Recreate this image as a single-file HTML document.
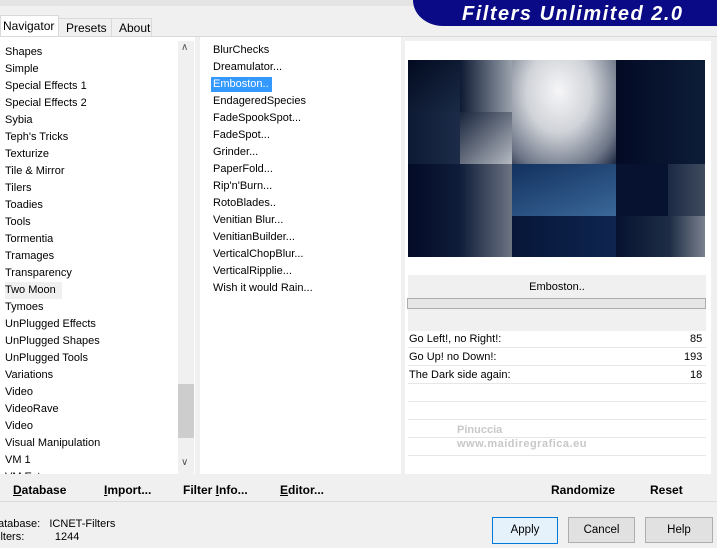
<!DOCTYPE html>
<html><head><style>
body{margin:0;width:717px;height:548px;background:#f0f0f0;font-family:"Liberation Sans",sans-serif;font-size:11.5px;color:#000;position:relative;overflow:hidden}
.a{position:absolute}
.list div{height:17px;line-height:17px;white-space:nowrap}
.cell{position:absolute}
</style></head><body>
<div class="a" style="left:0;top:0;width:717px;height:6px;background:#e4e4e4"></div>
<div class="a" style="left:413px;top:0;width:304px;height:26px;background:#0a0a86;border-bottom-left-radius:30px 26px"></div>
<div class="a" style="left:462px;top:3px;color:#fff;font-weight:bold;font-style:italic;font-size:20px;letter-spacing:1.5px">Filters Unlimited 2.0</div>
<!-- tabs -->
<div class="a" style="left:0;top:15px;width:57px;height:23px;background:#fff;border:1px solid #d9d9d9;border-bottom:none"></div>
<div class="a" style="left:3px;top:19px;font-size:12px">Navigator</div>
<div class="a" style="left:58px;top:18px;width:52px;height:18px;border:1px solid #d9d9d9;border-bottom:none"></div>
<div class="a" style="left:66px;top:21px;font-size:12px">Presets</div>
<div class="a" style="left:111px;top:18px;width:40px;height:18px;border:1px solid #d9d9d9;border-left:none;border-bottom:none"></div>
<div class="a" style="left:119px;top:21px;font-size:12px">About</div>
<div class="a" style="left:0;top:36px;width:717px;height:1px;background:#d9d9d9"></div>
<!-- left list -->
<div class="a" style="left:0;top:37px;width:195px;height:437px;background:#fff"></div>
<div class="a" style="left:178px;top:41px;width:16px;height:433px;background:#f0f0f0"></div>
<div class="a" style="left:178px;top:384px;width:16px;height:54px;background:#cdcdcd"></div>
<div class="a" style="left:181px;top:42px;font-size:10px;color:#555">&#8743;</div>
<div class="a" style="left:181px;top:457px;font-size:10px;color:#555">&#8744;</div>
<div class="a list" style="left:5px;top:44px;width:170px;height:430px;overflow:hidden;font-size:11px">
<div>Shapes</div><div>Simple</div><div>Special Effects 1</div><div>Special Effects 2</div><div>Sybia</div><div>Teph's Tricks</div><div>Texturize</div><div>Tile &amp; Mirror</div><div>Tilers</div><div>Toadies</div><div>Tools</div><div>Tormentia</div><div>Tramages</div><div>Transparency</div><div style="background:#f0f0f0;width:57px;margin-left:-5px;padding-left:5px">Two Moon</div><div>Tymoes</div><div>UnPlugged Effects</div><div>UnPlugged Shapes</div><div>UnPlugged Tools</div><div>Variations</div><div>Video</div><div>VideoRave</div><div>Video</div><div>Visual Manipulation</div><div>VM 1</div><div>VM Extravaganza</div>
</div>
<!-- middle list -->
<div class="a" style="left:200px;top:37px;width:201px;height:437px;background:#fff"></div>
<div class="a" style="left:211px;top:77px;width:61px;height:15px;background:#3399ff"></div>
<div class="a list" style="left:213px;top:42px;font-size:11px">
<div>BlurChecks</div><div>Dreamulator...</div><div style="color:#fff">Emboston..</div><div>EndageredSpecies</div><div>FadeSpookSpot...</div><div>FadeSpot...</div><div>Grinder...</div><div>PaperFold...</div><div>Rip'n'Burn...</div><div>RotoBlades..</div><div>Venitian Blur...</div><div>VenitianBuilder...</div><div>VerticalChopBlur...</div><div>VerticalRipplie...</div><div>Wish it would Rain...</div>
</div>
<!-- right panel -->
<div class="a" style="left:405px;top:41px;width:306px;height:433px;background:#fff"></div>
<div class="a" style="left:408px;top:60px;width:297px;height:197px;background:#0b1a33;overflow:hidden">
<div class="cell" style="left:0;top:0;width:52px;height:52px;background:linear-gradient(135deg,#020a20,#1a2a45)"></div>
<div class="cell" style="left:52px;top:0;width:52px;height:52px;background:linear-gradient(90deg,#0e1a33,#9aa2ad)"></div>
<div class="cell" style="left:104px;top:0;width:104px;height:104px;background:radial-gradient(ellipse at 45% 30%,#f6f6f8 0%,#d0d3d8 40%,#6a7385 80%,#1b2540 100%)"></div>
<div class="cell" style="left:208px;top:0;width:89px;height:104px;background:linear-gradient(90deg,#030a24,#0d1d38)"></div>
<div class="cell" style="left:0;top:52px;width:52px;height:52px;background:linear-gradient(90deg,#0d1a34,#1c2b48)"></div>
<div class="cell" style="left:52px;top:52px;width:52px;height:52px;background:linear-gradient(135deg,#18243c,#b5bac2)"></div>
<div class="cell" style="left:0;top:104px;width:104px;height:93px;background:linear-gradient(90deg,#030b26,#0f1d3a 50%,#6c7482)"></div>
<div class="cell" style="left:104px;top:104px;width:104px;height:52px;background:linear-gradient(160deg,#12315f,#3a6899)"></div>
<div class="cell" style="left:104px;top:156px;width:104px;height:41px;background:linear-gradient(90deg,#071638,#0e2550)"></div>
<div class="cell" style="left:208px;top:104px;width:52px;height:52px;background:#061230"></div>
<div class="cell" style="left:260px;top:104px;width:37px;height:52px;background:linear-gradient(90deg,#1b2944,#404b5e)"></div>
<div class="cell" style="left:208px;top:156px;width:89px;height:41px;background:linear-gradient(90deg,#061230,#1e2d45 60%,#7a818e)"></div>
</div>
<div class="a" style="left:408px;top:275px;width:298px;height:56px;background:#f0f0f0"></div>
<div class="a" style="left:408px;top:281px;width:298px;text-align:center;font-size:11px">Emboston..</div>
<div class="a" style="left:407px;top:298px;width:297px;height:9px;background:#e6e6e6;border:1px solid #adadad"></div>
<div class="a" style="left:409px;top:333px;font-size:11px">Go Left!, no Right!:</div><div class="a" style="left:690px;top:333px;font-size:11px">85</div>
<div class="a" style="left:409px;top:351px;font-size:11px">Go Up! no Down!:</div><div class="a" style="left:684px;top:351px;font-size:11px">193</div>
<div class="a" style="left:409px;top:369px;font-size:11px">The Dark side again:</div><div class="a" style="left:690px;top:369px;font-size:11px">18</div>
<div class="a" style="left:408px;top:347px;width:298px;height:1px;background:#e6e6e6"></div>
<div class="a" style="left:408px;top:365px;width:298px;height:1px;background:#e6e6e6"></div>
<div class="a" style="left:408px;top:383px;width:298px;height:1px;background:#e6e6e6"></div>
<div class="a" style="left:408px;top:401px;width:298px;height:1px;background:#e6e6e6"></div>
<div class="a" style="left:408px;top:419px;width:298px;height:1px;background:#e6e6e6"></div>
<div class="a" style="left:408px;top:437px;width:298px;height:1px;background:#e6e6e6"></div>
<div class="a" style="left:408px;top:455px;width:298px;height:1px;background:#e6e6e6"></div>
<div class="a" style="left:457px;top:424px;color:#c8c8c8;font-weight:bold;font-size:11px">Pinuccia</div>
<div class="a" style="left:457px;top:438px;color:#c8c8c8;font-weight:bold;font-size:11px;letter-spacing:0.5px">www.maidiregrafica.eu</div>
<!-- bottom toolbar -->
<div class="a" style="left:0;top:474px;width:401px;height:26px;background:#f0f0f0"></div>
<div class="a" style="left:405px;top:474px;width:306px;height:26px;background:#f0f0f0"></div>
<div class="a" style="left:0;top:501px;width:717px;height:1px;background:#dcdcdc"></div>
<div class="a" style="left:13px;top:483px;font-weight:bold;font-size:12px"><u>D</u>atabase</div>
<div class="a" style="left:104px;top:483px;font-weight:bold;font-size:12px"><u>I</u>mport...</div>
<div class="a" style="left:183px;top:483px;font-weight:bold;font-size:12px">Filter <u>I</u>nfo...</div>
<div class="a" style="left:280px;top:483px;font-weight:bold;font-size:12px"><u>E</u>ditor...</div>
<div class="a" style="left:551px;top:483px;font-weight:bold;font-size:12px">Randomize</div>
<div class="a" style="left:650px;top:483px;font-weight:bold;font-size:12px">Reset</div>
<!-- status -->
<div class="a" style="left:-2px;top:518px;font-size:11px">atabase:&nbsp;&nbsp; ICNET-Filters</div>
<div class="a" style="left:-2px;top:531px;font-size:11px">ilters:&nbsp;&nbsp;&nbsp;&nbsp;&nbsp;&nbsp;&nbsp;&nbsp;&nbsp; 1244</div>
<div class="a" style="left:492px;top:517px;width:64px;height:25px;background:#e5f1fb;border:1px solid #0078d7;text-align:center;line-height:25px">Apply</div>
<div class="a" style="left:568px;top:517px;width:65px;height:24px;background:#e1e1e1;border:1px solid #adadad;text-align:center;line-height:24px">Cancel</div>
<div class="a" style="left:645px;top:517px;width:66px;height:24px;background:#e1e1e1;border:1px solid #adadad;text-align:center;line-height:24px">Help</div>
</body></html>
